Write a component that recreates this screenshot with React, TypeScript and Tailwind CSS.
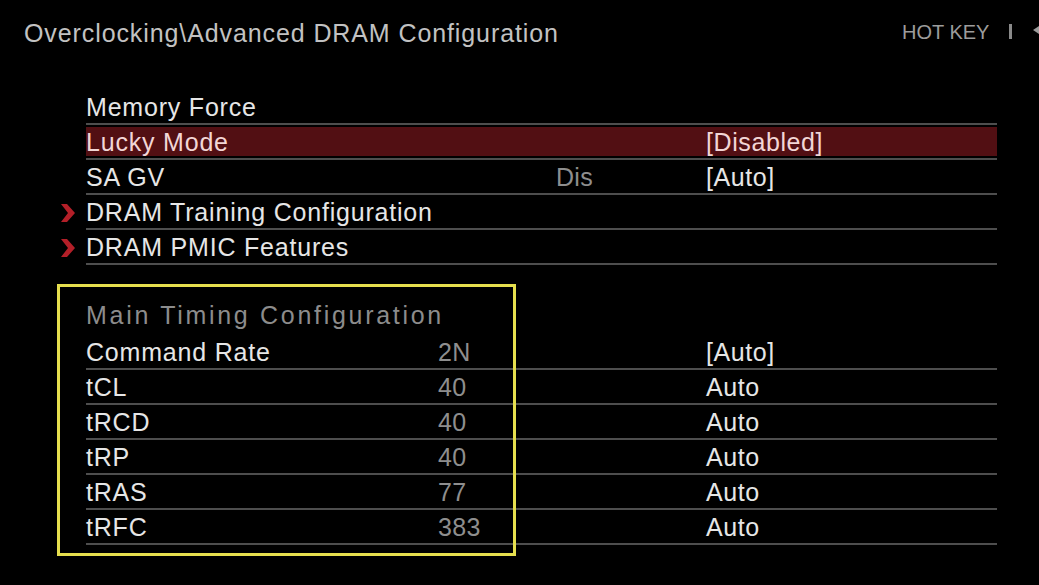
type Row = {
  label: string;
  current?: string;
  currentPad?: string;
  value?: string;
  sub?: boolean;
  active?: boolean;
  header?: boolean;
  blank?: boolean;
};

const rows: Row[] = [
  { label: "Memory Force" },
  { label: "Lucky Mode", value: "[Disabled]", active: true },
  { label: "SA GV", current: "Dis", currentPad: "pl-[118px]", value: "[Auto]" },
  { label: "DRAM Training Configuration", sub: true },
  { label: "DRAM PMIC Features", sub: true },
  { label: "", blank: true },
  { label: "Main Timing Configuration", header: true },
  { label: "Command Rate", current: "2N", value: "[Auto]" },
  { label: "tCL", current: "40", value: "Auto" },
  { label: "tRCD", current: "40", value: "Auto" },
  { label: "tRP", current: "40", value: "Auto" },
  { label: "tRAS", current: "77", value: "Auto" },
  { label: "tRFC", current: "383", value: "Auto" },
];

function Chevron() {
  return (
    <svg width="14" height="18" viewBox="0 0 14 18" className="block">
      <polygon points="0,0 6,0 14,9 6,18 0,18 7,9" fill="#b31f28" />
    </svg>
  );
}

function SettingRow({ row }: { row: Row }) {
  const lined = !row.header && !row.blank;
  const text = row.active ? "text-[#f2d6d6]" : "text-[#e6e6e6]";
  return (
    <div className="flex h-[35px]">
      <div className="flex w-[26px] items-center justify-start pl-[1px] pt-[1px]">{row.sub && <Chevron />}</div>
      <div
        className={
          "flex w-[911px] flex-col " + (lined ? "border-b-2 border-[#4e4e4e]" : "")
        }
      >
        <div
          className={
            "flex flex-1 items-center pt-[2px] " +
            (row.active ? "my-[2px] bg-[#520f13]" : "") +
            (row.header ? " pb-[6px]" : "")
          }
        >
          {row.header ? (
            <span className="tracking-[2.7px] text-[#8c8c8c]">{row.label}</span>
          ) : (
            <>
              <span className={"w-[352px] tracking-[0.8px] " + text}>{row.label}</span>
              <span className={"w-[268px] tracking-[0.3px] text-[#8e8e8e] " + (row.currentPad ?? "")}>
                {row.current}
              </span>
              <span className={"tracking-[0.6px] " + text}>{row.value}</span>
            </>
          )}
        </div>
      </div>
    </div>
  );
}

export default function App() {
  return (
    <div
      className="relative h-[585px] w-full overflow-hidden bg-black text-[25px] leading-[25px]"
      style={{ fontFamily: '"Liberation Sans", Arial, sans-serif' }}
    >
      <div className="flex items-center pt-[21px]">
        <div className="w-[902px] shrink-0 pl-[24px] tracking-[0.9px] text-[#c2c2c2]">
          Overclocking\Advanced DRAM Configuration
        </div>
        <div className="flex shrink-0 items-center pb-[4px] text-[20px] leading-[20px] text-[#9c9c9c]">
          <span>HOT KEY</span>
          <span className="ml-[20px] h-[15px] w-[3px] bg-[#8a8a8a]" />
          <svg width="14" height="14" viewBox="0 0 14 14" className="ml-[21px]">
            <polygon points="0,5 6,1 6,9" fill="#9c9c9c" />
            <path d="M5 5 H10 A3 3 0 0 1 10 11 H7" stroke="#9c9c9c" strokeWidth="2" fill="none" />
          </svg>
        </div>
      </div>

      <div className="mt-[44px] ml-[60px]">
        {rows.map((r, i) => (
          <SettingRow key={i} row={r} />
        ))}
      </div>

      <div className="pointer-events-none absolute left-[57px] top-[284px] h-[272px] w-[459px] border-[3px] border-[#e6df4e]" />
    </div>
  );
}
